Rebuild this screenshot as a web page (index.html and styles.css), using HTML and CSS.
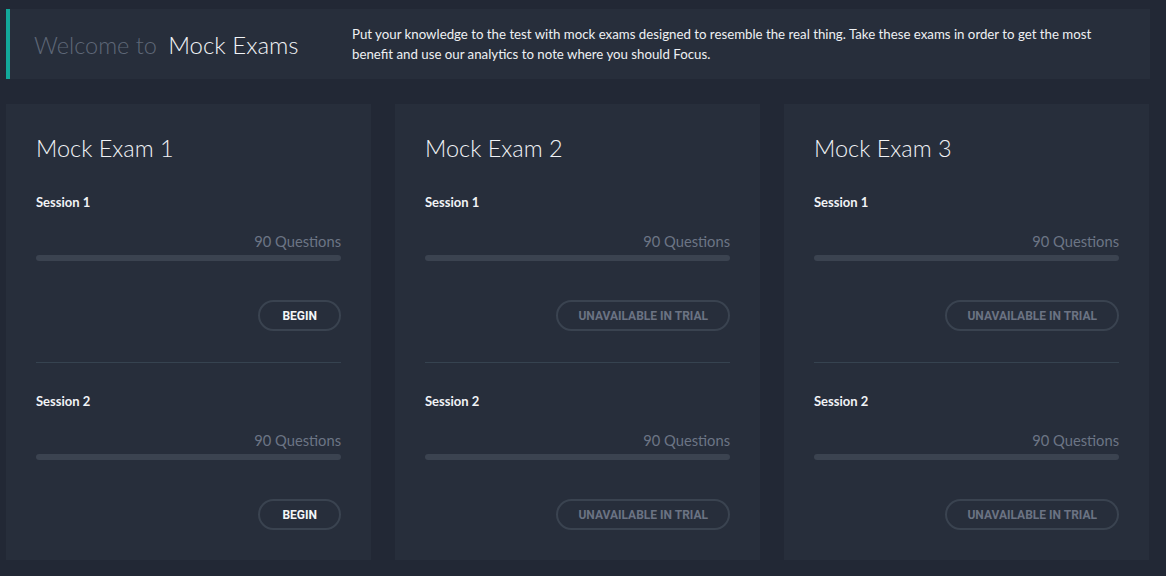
FILE: index.html
```html
<!DOCTYPE html>
<html lang="en">
<head>
<meta charset="utf-8">
<title>Mock Exams</title>
<link rel="stylesheet" href="styles.css">
</head>
<body>
<div class="page">
  <header class="intro">
    <h1 class="intro-title"><span class="welcome">Welcome to</span> <span class="name">Mock Exams</span></h1>
    <p class="intro-text">Put your knowledge to the test with mock exams designed to resemble the real thing. Take these exams in order to get the most benefit and use our analytics to note where you should Focus.</p>
  </header>
  <main class="cards">
    <section class="card">
      <h2 class="card-title">Mock Exam 1</h2>
      <div class="session">
        <div class="session-name">Session 1</div>
        <div class="session-count">90 Questions</div>
        <div class="bar"></div>
        <div class="actions"><button class="btn">BEGIN</button></div>
      </div>
      <div class="divider"></div>
      <div class="session">
        <div class="session-name">Session 2</div>
        <div class="session-count">90 Questions</div>
        <div class="bar"></div>
        <div class="actions"><button class="btn">BEGIN</button></div>
      </div>
    </section>
    <section class="card">
      <h2 class="card-title">Mock Exam 2</h2>
      <div class="session">
        <div class="session-name">Session 1</div>
        <div class="session-count">90 Questions</div>
        <div class="bar"></div>
        <div class="actions"><button class="btn btn-disabled">UNAVAILABLE IN TRIAL</button></div>
      </div>
      <div class="divider"></div>
      <div class="session">
        <div class="session-name">Session 2</div>
        <div class="session-count">90 Questions</div>
        <div class="bar"></div>
        <div class="actions"><button class="btn btn-disabled">UNAVAILABLE IN TRIAL</button></div>
      </div>
    </section>
    <section class="card">
      <h2 class="card-title">Mock Exam 3</h2>
      <div class="session">
        <div class="session-name">Session 1</div>
        <div class="session-count">90 Questions</div>
        <div class="bar"></div>
        <div class="actions"><button class="btn btn-disabled">UNAVAILABLE IN TRIAL</button></div>
      </div>
      <div class="divider"></div>
      <div class="session">
        <div class="session-name">Session 2</div>
        <div class="session-count">90 Questions</div>
        <div class="bar"></div>
        <div class="actions"><button class="btn btn-disabled">UNAVAILABLE IN TRIAL</button></div>
      </div>
    </section>
  </main>
</div>
</body>
</html>
```
FILE: styles.css
```css
* { box-sizing: border-box; }
html, body { margin: 0; padding: 0; }
body {
  background: #222835;
  font-family: Lato, "Open Sans", sans-serif;
  color: #f1f3f6;
}
.page {
  padding: 9px 16px 16px 6px;
}
.intro {
  display: flex;
  align-items: center;
  height: 70px;
  background: #272e3b;
  border-left: 4px solid #12a89a;
  padding-left: 24px;
}
.intro-title {
  margin: 0;
  width: 318px;
  flex: none;
  font-size: 23.5px;
  font-weight: 300;
  white-space: nowrap;
}
.welcome { color: #5e6777; }
.name { color: #f1f3f6; margin-left: 5px; font-size: 24px; }
.intro-text {
  margin: 0;
  font-size: 13.25px;
  line-height: 20px;
  color: #eef0f3;
  max-width: 760px;
}
.cards {
  display: grid;
  grid-template-columns: repeat(3, 365px);
  column-gap: 24px;
  margin-top: 25px;
}
.card {
  background: #272e3b;
  height: 456px;
  padding: 27px 30px 0 30px;
}
.card-title {
  margin: 0;
  font-size: 23.5px;
  font-weight: 300;
  line-height: 34px;
  color: #f1f3f6;
}
.session { padding-top: 26px; }
.card-title + .session { padding-top: 25px; }
.session-name {
  font-size: 13px;
  font-weight: 700;
  line-height: 24px;
  color: #f1f3f6;
}
.session-count {
  margin-top: 17px;
  text-align: right;
  font-size: 14.7px;
  line-height: 20px;
  color: #6c7585;
}
.bar {
  margin-top: 4px;
  height: 6px;
  border-radius: 3px;
  background: #3b4350;
}
.actions {
  display: flex;
  justify-content: flex-end;
  margin-top: 39px;
}
.btn {
  height: 31px;
  padding: 0 22px;
  border: 2px solid #3a4350;
  border-radius: 16px;
  background: transparent;
  color: #f4f5f7;
  font-family: Roboto, sans-serif;
  font-weight: 700;
  font-size: 12px;
  letter-spacing: 0;
}
.btn-disabled {
  color: #6b7383;
  padding: 0 20px;
}
.divider {
  margin-top: 31px;
  height: 1px;
  background: #364350;
}
```
